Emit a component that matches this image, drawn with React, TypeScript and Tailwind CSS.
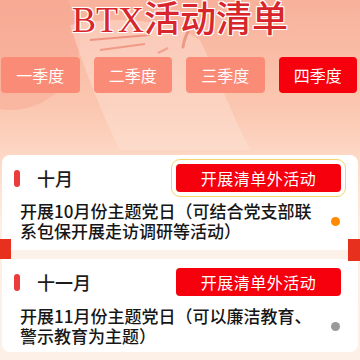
import React from 'react'

const cjk = { fontFamily: '"Noto Sans CJK SC", "Noto Sans", sans-serif' }

const quarters = ['一季度', '二季度', '三季度', '四季度']

interface Month {
  name: string
  desc: string
  dot: string
  focused?: boolean
}

const months: Month[] = [
  {
    name: '十月',
    desc: '开展10月份主题党日（可结合党支部联系包保开展走访调研等活动）',
    dot: 'bg-[#ff8a00]',
    focused: true,
  },
  {
    name: '十一月',
    desc: '开展11月份主题党日（可以廉洁教育、警示教育为主题）',
    dot: 'bg-[#9a9a9a]',
  },
]

function MonthHeader({ m }: { m: Month }) {
  return (
    <div className="flex items-center justify-between pl-[12px] pr-[17px] h-[28px]">
      <div className="flex items-center">
        <span className="w-[6px] h-[17px] rounded-full bg-[#ec3b3b]" />
        <span className="ml-[17px] text-[18px] font-medium text-[#1c1c1c]">{m.name}</span>
      </div>
      <button
        className={
          'w-[165px] h-[28px] rounded-[4px] bg-[#f6000e] text-white text-[16px] tracking-[0.5px] ' +
          (m.focused ? 'outline-[1.5px] outline-solid outline-offset-[4px] outline-[#f3d56a]' : '')
        }
      >
        开展清单外活动
      </button>
    </div>
  )
}

function MonthBody({ m, mt }: { m: Month; mt: string }) {
  return (
    <div className={'flex items-center pl-[18px] pr-[18px] ' + mt}>
      <p className="w-[300px] text-[17px] leading-[20px] font-medium text-[#161616]">{m.desc}</p>
      <span className={'ml-auto w-[9px] h-[9px] rounded-full flex-none ' + m.dot} />
    </div>
  )
}

export default function App() {
  return (
    <div
      className="relative w-[360px] h-[360px] overflow-hidden bg-[linear-gradient(180deg,#f8b19b_0%,#fbc7b0_30%,#fddac8_45%,#fdeee3_62%,#fdf1e7_100%)]"
      style={cjk}
    >
      {/* background paper + pen */}
      <svg className="absolute left-0 top-0" width="360" height="160" viewBox="0 0 360 160">
        <circle cx="10" cy="40" r="70" fill="#f59a86" opacity="0.35" />
        <path d="M70 25 C 120 15, 170 20, 200 40 C 215 70, 230 110, 250 150 L 120 150 C 100 110, 85 70, 70 25 Z" fill="#fde2d6" opacity="0.45" />
        <path d="M90 40 L150 35" stroke="#ee8572" strokeWidth="2" opacity="0.8" />
        <path d="M100 50 L145 44" stroke="#ee8572" strokeWidth="2" opacity="0.7" />
        <path d="M158 53 L168 48" stroke="#ee8572" strokeWidth="2" opacity="0.6" />
        <path d="M190 28 C 186 34, 184 40, 183 47" stroke="#e77865" strokeWidth="3" strokeLinecap="round" opacity="0.6" />
      </svg>

      <div className="relative">
        <div className="flex justify-center h-[57px]">
          <h1 className="text-[36px] leading-[32px] font-medium text-[#d7262c] [text-shadow:0_0_1px_#fff,0_0_2px_#fff,1px_1px_0_#fff,-1px_-1px_0_#fff,1px_-1px_0_#fff,-1px_1px_0_#fff]">
            <span style={{ fontFamily: '"Liberation Serif", serif' }}>BTX</span>
            <span>活动清单</span>
          </h1>
        </div>

        <div className="grid grid-cols-4 gap-[14px] pl-[1px] pr-[3px]">
          {quarters.map((q, i) => (
            <div
              key={q}
              className={
                'h-[36px] rounded-[4px] flex items-center justify-center text-white text-[16px] ' +
                (i === 3 ? 'bg-[#f6000e]' : 'bg-[#f98b77]')
              }
            >
              {q}
            </div>
          ))}
        </div>

        <div className="mt-[62px] px-[2px]">
          <div className="h-[95px] bg-white rounded-t-[8px] pt-[9px]">
            <MonthHeader m={months[0]} />
            <MonthBody m={months[0]} mt="mt-[9px]" />
          </div>
          <div className="h-[9px] bg-[#fdf2e9]" />
          <div className="h-[93px] bg-white rounded-b-[8px] pt-[9px]">
            <MonthHeader m={months[1]} />
            <MonthBody m={months[1]} mt="mt-[10px]" />
          </div>
        </div>
      </div>

      <div className="absolute left-0 top-[239px] w-[11px] h-[20px] bg-[#e8301f]" />
      <div className="absolute right-0 top-[239px] w-[12px] h-[22px] bg-[#e8301f]" />
    </div>
  )
}
